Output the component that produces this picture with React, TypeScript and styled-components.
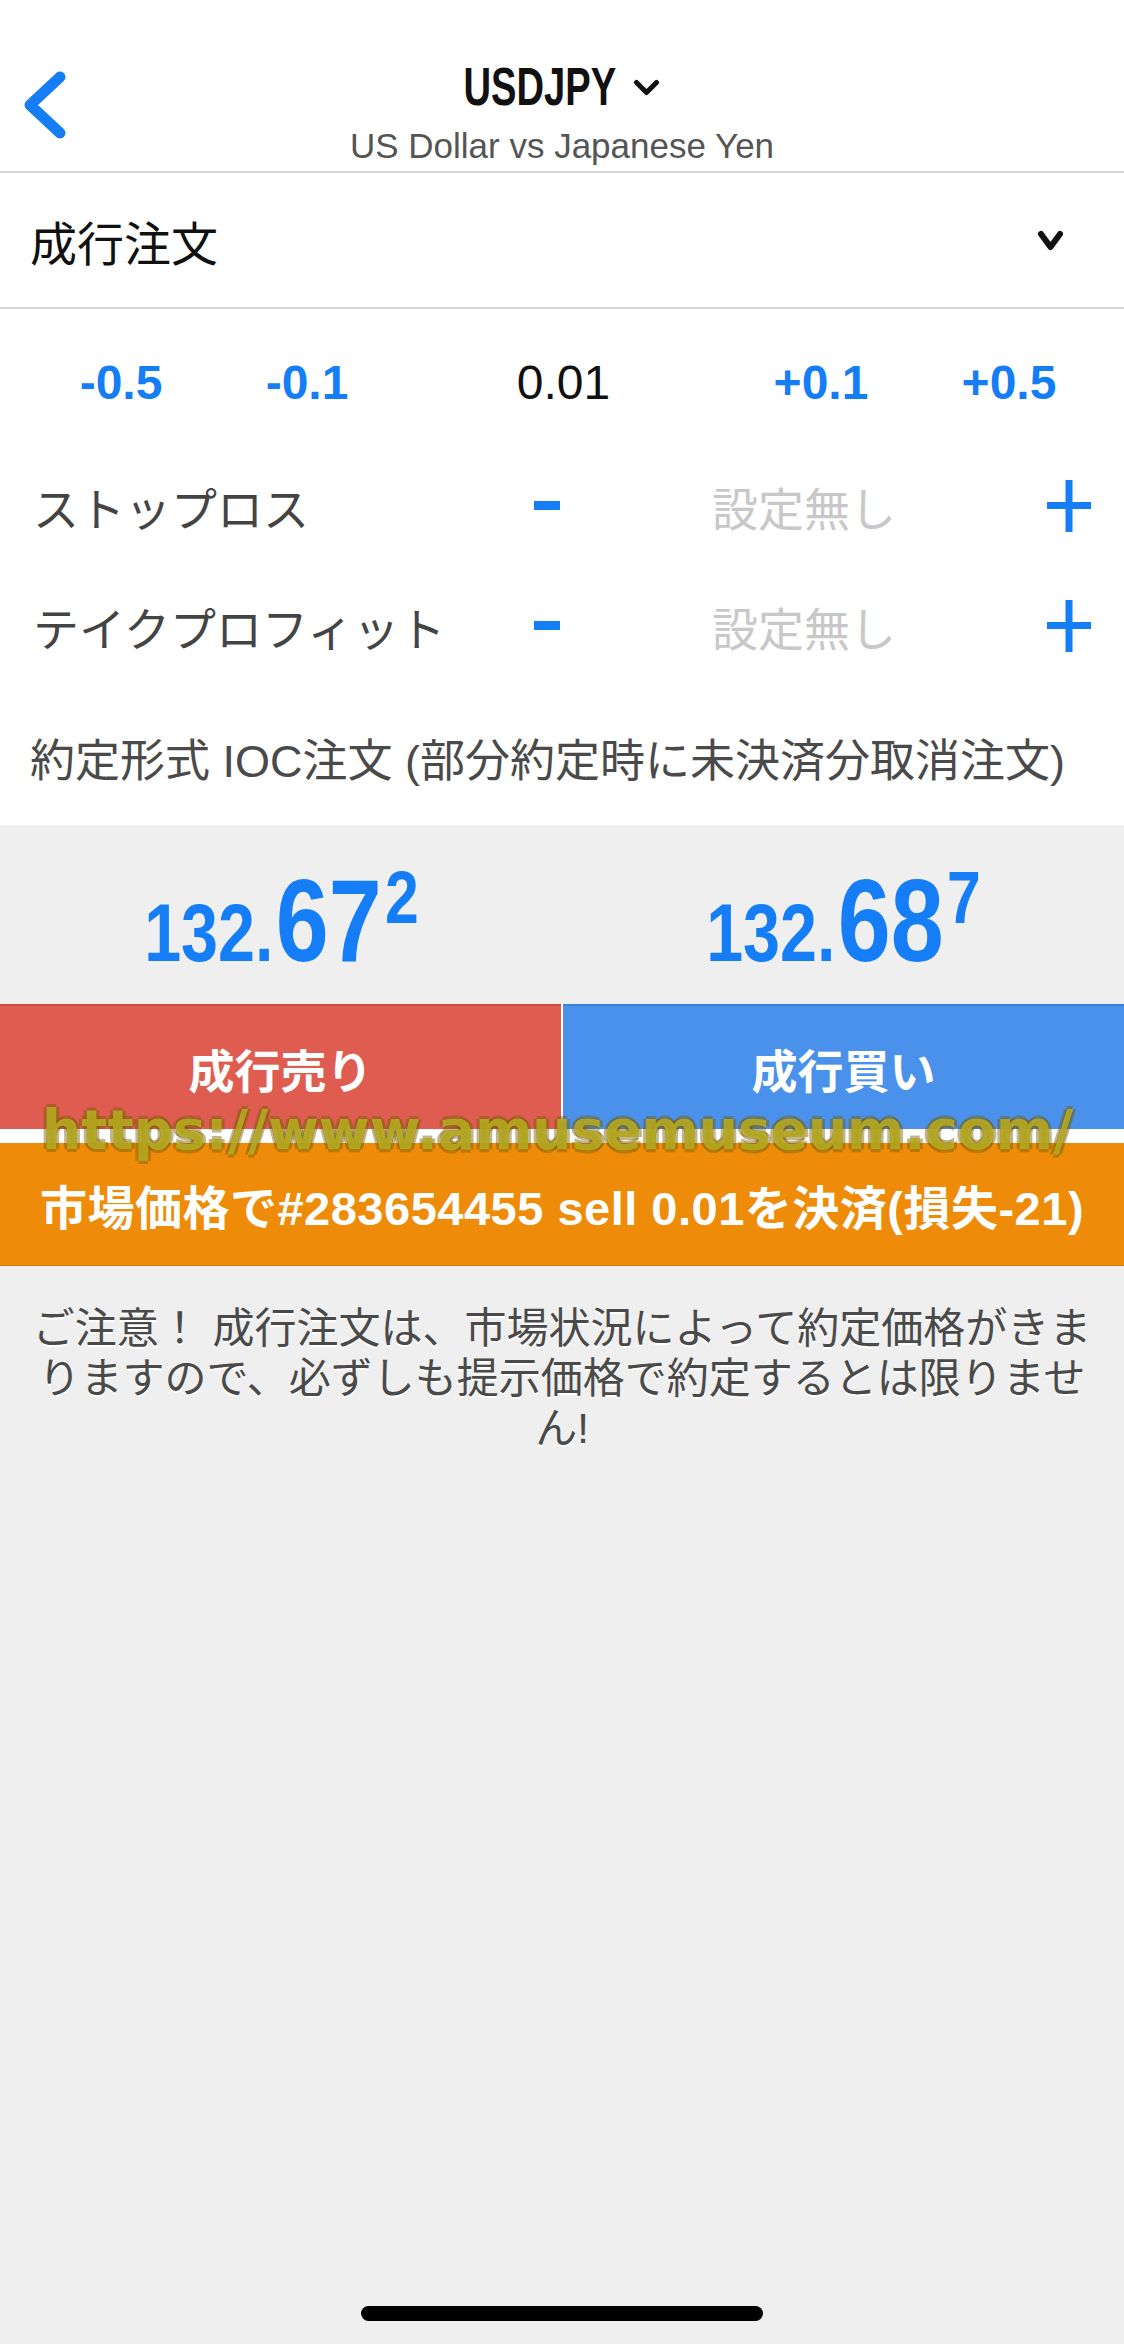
import { ReactElement } from 'react'
import styled, { createGlobalStyle } from 'styled-components'

const BLUE = '#157ef7'
const JP = `"Liberation Sans", "Noto Sans CJK JP", sans-serif`

const GlobalStyle = createGlobalStyle`
  body {
    margin: 0;
    background: #efefef;
    font-family: ${JP};
  }
`

function BackIcon(): ReactElement {
  return (
    <svg width="44" height="70" viewBox="0 0 44 70">
      <polyline points="38,7 8,35 38,63" fill="none" stroke={BLUE} strokeWidth="11" strokeLinecap="round" strokeLinejoin="round" />
    </svg>
  )
}

function CaretDown({ w, h, stroke }: { w: number; h: number; stroke: number }): ReactElement {
  return (
    <svg width={w} height={h} viewBox={`0 0 ${w} ${h}`}>
      <polyline
        points={`${stroke / 2 + 1},${stroke / 2 + 1} ${w / 2},${h - stroke / 2 - 1} ${w - stroke / 2 - 1},${stroke / 2 + 1}`}
        fill="none"
        stroke="#111"
        strokeWidth={stroke}
        strokeLinecap="round"
        strokeLinejoin="round"
      />
    </svg>
  )
}

function MinusIcon(): ReactElement {
  return (
    <svg width="26" height="10" viewBox="0 0 26 10">
      <rect x="0" y="0" width="26" height="9" fill={BLUE} />
    </svg>
  )
}

function PlusIcon(): ReactElement {
  return (
    <svg width="44" height="52" viewBox="0 0 44 52">
      <rect x="0" y="22" width="44" height="7" fill={BLUE} />
      <rect x="18.5" y="0" width="7" height="52" fill={BLUE} />
    </svg>
  )
}

function StepRow({ label }: { label: string }): ReactElement {
  return (
    <Row>
      <RowLabel>{label}</RowLabel>
      <IconCell>
        <MinusIcon />
      </IconCell>
      <Placeholder>設定無し</Placeholder>
      <IconCell $end>
        <PlusIcon />
      </IconCell>
    </Row>
  )
}

function Price({ head, big, tail }: { head: string; big: string; tail: string }): ReactElement {
  return (
    <PriceCell>
      <PriceBox>
        <PriceHead>{head}</PriceHead>
        <PriceBig>{big}</PriceBig>
        <PriceSup>{tail}</PriceSup>
      </PriceBox>
    </PriceCell>
  )
}

export default function App(): ReactElement {
  return (
    <Page>
      <GlobalStyle />
      <Header>
        <BackButton>
          <BackIcon />
        </BackButton>
        <TitleBlock>
          <TitleLine>
            <Symbol>USDJPY</Symbol>
            <CaretDown w={27} h={17} stroke={5} />
          </TitleLine>
          <Subtitle>US Dollar vs Japanese Yen</Subtitle>
        </TitleBlock>
      </Header>

      <OrderType>
        <OrderTypeLabel>成行注文</OrderTypeLabel>
        <CaretDown w={27} h={21} stroke={6} />
      </OrderType>

      <Form>
        <LotRow>
          <LotStep>-0.5</LotStep>
          <LotStep>-0.1</LotStep>
          <LotValue>0.01</LotValue>
          <LotStep>+0.1</LotStep>
          <LotStep>+0.5</LotStep>
        </LotRow>
        <StepRow label="ストップロス" />
        <StepRow label="テイクプロフィット" />
        <FillPolicy>約定形式 IOC注文 (部分約定時に未決済分取消注文)</FillPolicy>
      </Form>

      <Quotes>
        <Price head="132." big="67" tail="2" />
        <Price head="132." big="68" tail="7" />
      </Quotes>

      <Actions>
        <TradeButton $kind="sell">成行売り</TradeButton>
        <TradeButton $kind="buy">成行買い</TradeButton>
        <CloseButton>市場価格で#283654455 sell 0.01を決済(損失-21)</CloseButton>
        <Watermark>https://www.amusemuseum.com/</Watermark>
      </Actions>

      <Notice>
        ご注意！ 成行注文は、市場状況によって約定価格がきま
        <br />
        りますので、必ずしも提示価格で約定するとは限りませ
        <br />
        ん!
      </Notice>

      <HomeIndicator />
    </Page>
  )
}

const Page = styled.div`
  min-height: 2344px;
  display: flex;
  flex-direction: column;
  background: #efefef;
`

const Header = styled.header`
  height: 171px;
  background: #fff;
  border-bottom: 2px solid #d6d6d6;
  display: grid;
  grid-template-columns: 1fr auto 1fr;
  align-items: start;
`

const BackButton = styled.div`
  display: flex;
  padding: 70px 0 0 22px;
`

const TitleBlock = styled.div`
  display: flex;
  flex-direction: column;
  align-items: center;
  padding-top: 60px;
`

/* the condensed face of the original is imitated by squeezing Liberation Sans */
const TitleLine = styled.div`
  display: flex;
  align-items: center;
  gap: 16px;
  padding-right: 60px;
`

const Symbol = styled.div`
  font-family: "Liberation Sans", sans-serif;
  font-weight: 700;
  font-size: 53px;
  line-height: 54px;
  color: #111;
  transform: scaleX(0.72);
  transform-origin: right center;
`

const Subtitle = styled.div`
  font-family: "Liberation Sans", sans-serif;
  font-size: 35px;
  line-height: 44px;
  color: #555;
  margin-top: 10px;
`

const OrderType = styled.div`
  height: 134px;
  background: #fff;
  border-bottom: 2px solid #d6d6d6;
  display: flex;
  align-items: center;
  justify-content: space-between;
  padding: 0 60px 0 30px;
`

const OrderTypeLabel = styled.div`
  font-family: "Noto Sans CJK JP", sans-serif;
  font-size: 47px;
  color: #111;
`

const Form = styled.div`
  background: #fff;
  padding: 13px 0 8px;
  display: flex;
  flex-direction: column;
`

const LotRow = styled.div`
  height: 120px;
  margin-bottom: 4px;
  display: grid;
  grid-template-columns: 186px 186px 1fr 188px 188px;
  padding: 0 21px 0 28px;
  align-items: center;
  justify-items: center;
`

const LotStep = styled.div`
  font-family: "Liberation Sans", sans-serif;
  font-weight: 700;
  font-size: 48px;
  color: ${BLUE};
`

const LotValue = styled.div`
  font-family: "Liberation Sans", sans-serif;
  font-size: 48px;
  color: #111;
`

const Row = styled.div`
  height: 120px;
  display: grid;
  grid-template-columns: 456px 116px 398px 1fr;
  padding: 0 33px;
  align-items: center;
`

const RowLabel = styled.div`
  font-family: "Noto Sans CJK JP", sans-serif;
  font-size: 46px;
  color: #444;
  white-space: nowrap;
`

const IconCell = styled.div<{ $end?: boolean }>`
  display: flex;
  justify-content: ${(p) => (p.$end ? 'flex-end' : 'center')};
`

const Placeholder = styled.div`
  font-family: "Noto Sans CJK JP", sans-serif;
  font-size: 46px;
  color: #c8c8c8;
  text-align: center;
`

const FillPolicy = styled.div`
  height: 120px;
  margin-top: 11px;
  display: flex;
  align-items: center;
  padding-left: 30px;
  font-family: ${JP};
  font-size: 45px;
  color: #4a4a4a;
  white-space: nowrap;
`

const Quotes = styled.div`
  height: 179px;
  display: grid;
  grid-template-columns: 1fr 1fr;
`

const PriceCell = styled.div`
  display: flex;
  justify-content: center;
  padding-top: 38px;
`

const PriceBox = styled.div`
  display: flex;
  align-items: baseline;
  font-family: "Liberation Sans", sans-serif;
  font-weight: 700;
  color: ${BLUE};
  line-height: 1;
  transform: scaleX(0.82);
`

const PriceHead = styled.span`
  font-size: 81px;
`

const PriceBig = styled.span`
  font-size: 116px;
  margin-left: 3px;
`

const PriceSup = styled.span`
  align-self: flex-start;
  font-size: 74px;
  margin-left: 4px;
  margin-top: -2px;
`

const Actions = styled.div`
  position: relative;
  display: grid;
  grid-template-columns: 1fr 1fr;
  column-gap: 2px;
  row-gap: 14px;
  background: #fff;
`

const TradeButton = styled.div<{ $kind: 'sell' | 'buy' }>`
  height: 123px;
  border-top: 2px solid ${(p) => (p.$kind === 'sell' ? '#c84a40' : '#3b7fd6')};
  background: ${(p) => (p.$kind === 'sell' ? '#de5c50' : '#4a91ec')};
  display: flex;
  align-items: center;
  justify-content: center;
  font-family: ${JP};
  font-weight: 700;
  font-size: 46px;
  color: #fff;
`

const CloseButton = styled.div`
  grid-column: 1 / -1;
  height: 122px;
  border-bottom: 1px solid #d27a05;
  background: #ee8c0a;
  display: flex;
  align-items: center;
  justify-content: center;
  font-family: ${JP};
  font-size: 47px;
  font-weight: 700;
  letter-spacing: 0.5px;
  color: #fff;
  white-space: nowrap;
`

const Watermark = styled.div`
  position: absolute;
  left: 42px;
  top: 94px;
  font-family: "DejaVu Sans", sans-serif;
  font-weight: 700;
  font-size: 55px;
  color: rgba(196, 190, 40, 0.7);
  text-shadow:
    3px 0 0 rgba(120, 90, 0, 0.45),
    -3px 0 0 rgba(120, 90, 0, 0.45),
    0 3px 0 rgba(120, 90, 0, 0.45),
    0 -3px 0 rgba(120, 90, 0, 0.45);
  white-space: nowrap;
  pointer-events: none;
`

const Notice = styled.div`
  margin-top: 38px;
  padding: 0 20px;
  text-align: center;
  font-family: ${JP};
  font-size: 42px;
  line-height: 50px;
  color: #4a4a4a;
  text-shadow: 0 2px 0 #fff;
`

const HomeIndicator = styled.div`
  margin: auto auto 23px;
  width: 402px;
  height: 15px;
  border-radius: 8px;
  background: #000;
`
